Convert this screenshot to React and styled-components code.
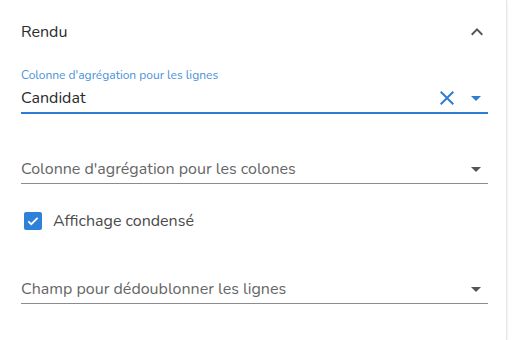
import React from "react";
import styled, { createGlobalStyle } from "styled-components";

const Global = createGlobalStyle`
  html, body { margin: 0; padding: 0; background: #ffffff; }
  body { font-family: "Nunito", "Lato", "Open Sans", sans-serif; }
`;

const Panel = styled.div`
  width: 507px;
  height: 340px;
  box-sizing: border-box;
  background: #fff;
  border-right: 1px solid #e6e6e6;
  box-shadow: 0 1px 2px rgba(0,0,0,0.12);
  padding: 0 18px 0 21px;
`;

const Header = styled.div`
  height: 64px;
  display: flex;
  align-items: center;
  justify-content: space-between;
  color: #2b2b2b;
  font-size: 16px;
`;

const HeaderIcon = styled.span`
  display: flex;
  width: 24px;
  height: 24px;
  margin-right: -1px;
  color: #555;
`;

const Field = styled.div`
  margin-top: ${(p) => p.$mt}px;
  padding-top: ${(p) => (p.$label ? 4 : 0)}px;
`;

const Label = styled.div`
  font-size: 12px;
  line-height: 14px;
  color: #4a90d9;
  margin-bottom: 3px;
`;

const Row = styled.div`
  height: 25px;
  padding-bottom: 2px;
  display: flex;
  align-items: center;
  border-bottom: ${(p) => (p.$active ? "2px solid #2f7dd3" : "1px solid #8c8c8c")};
`;

const Value = styled.span`
  flex: 1;
  font-size: 16px;
  color: ${(p) => (p.$placeholder ? "#666" : "#2b2b2b")};
  white-space: nowrap;
`;

const Icon = styled.span`
  display: flex;
  align-items: center;
  justify-content: center;
  width: 24px;
  height: 24px;
  color: ${(p) => p.$color || "#555"};
  margin-left: ${(p) => p.$ml || 0}px;
`;

const CheckRow = styled.label`
  margin-top: 18px;
  height: 38px;
  display: flex;
  align-items: center;
  font-size: 16px;
  color: #4a4a4a;
  gap: 11px;
`;

const Box = styled.span`
  width: 18px;
  height: 18px;
  margin-left: 3px;
  border-radius: 2px;
  background: #2f80d8;
  display: flex;
  align-items: center;
  justify-content: center;
`;

const Caret = () => (
  <svg width="24" height="24" viewBox="0 0 24 24"><path d="M7 10l5 5 5-5z" fill="currentColor" /></svg>
);

export default function App() {
  return (
    <>
      <Global />
      <Panel>
        <Header>
          <span>Rendu</span>
          <HeaderIcon>
            <svg width="24" height="24" viewBox="0 0 24 24"><path d="M12 8l-6 6 1.41 1.41L12 10.83l4.59 4.58L18 14z" fill="currentColor" /></svg>
          </HeaderIcon>
        </Header>
        <Field $mt={0} $label>
          <Label>Colonne d'agrégation pour les lignes</Label>
          <Row $active>
            <Value>Candidat</Value>
            <Icon $color="#2f7dd3">
              <svg width="24" height="24" viewBox="0 0 24 24"><path d="M19 6.41L17.59 5 12 10.59 6.41 5 5 6.41 10.59 12 5 17.59 6.41 19 12 13.41 17.59 19 19 17.59 13.41 12z" fill="currentColor" /></svg>
            </Icon>
            <Icon $color="#2f7dd3" $ml={5}><Caret /></Icon>
          </Row>
        </Field>
        <Field $mt={42}>
          <Row>
            <Value $placeholder>Colonne d'agrégation pour les colones</Value>
            <Icon><Caret /></Icon>
          </Row>
        </Field>
        <CheckRow>
          <Box>
            <svg width="14" height="14" viewBox="0 0 24 24"><path d="M4 12.5l5 5L20 6.5" stroke="#fff" strokeWidth="3" fill="none" /></svg>
          </Box>
          Affichage condensé
        </CheckRow>
        <Field $mt={36}>
          <Row>
            <Value $placeholder>Champ pour dédoublonner les lignes</Value>
            <Icon><Caret /></Icon>
          </Row>
        </Field>
      </Panel>
    </>
  );
}
